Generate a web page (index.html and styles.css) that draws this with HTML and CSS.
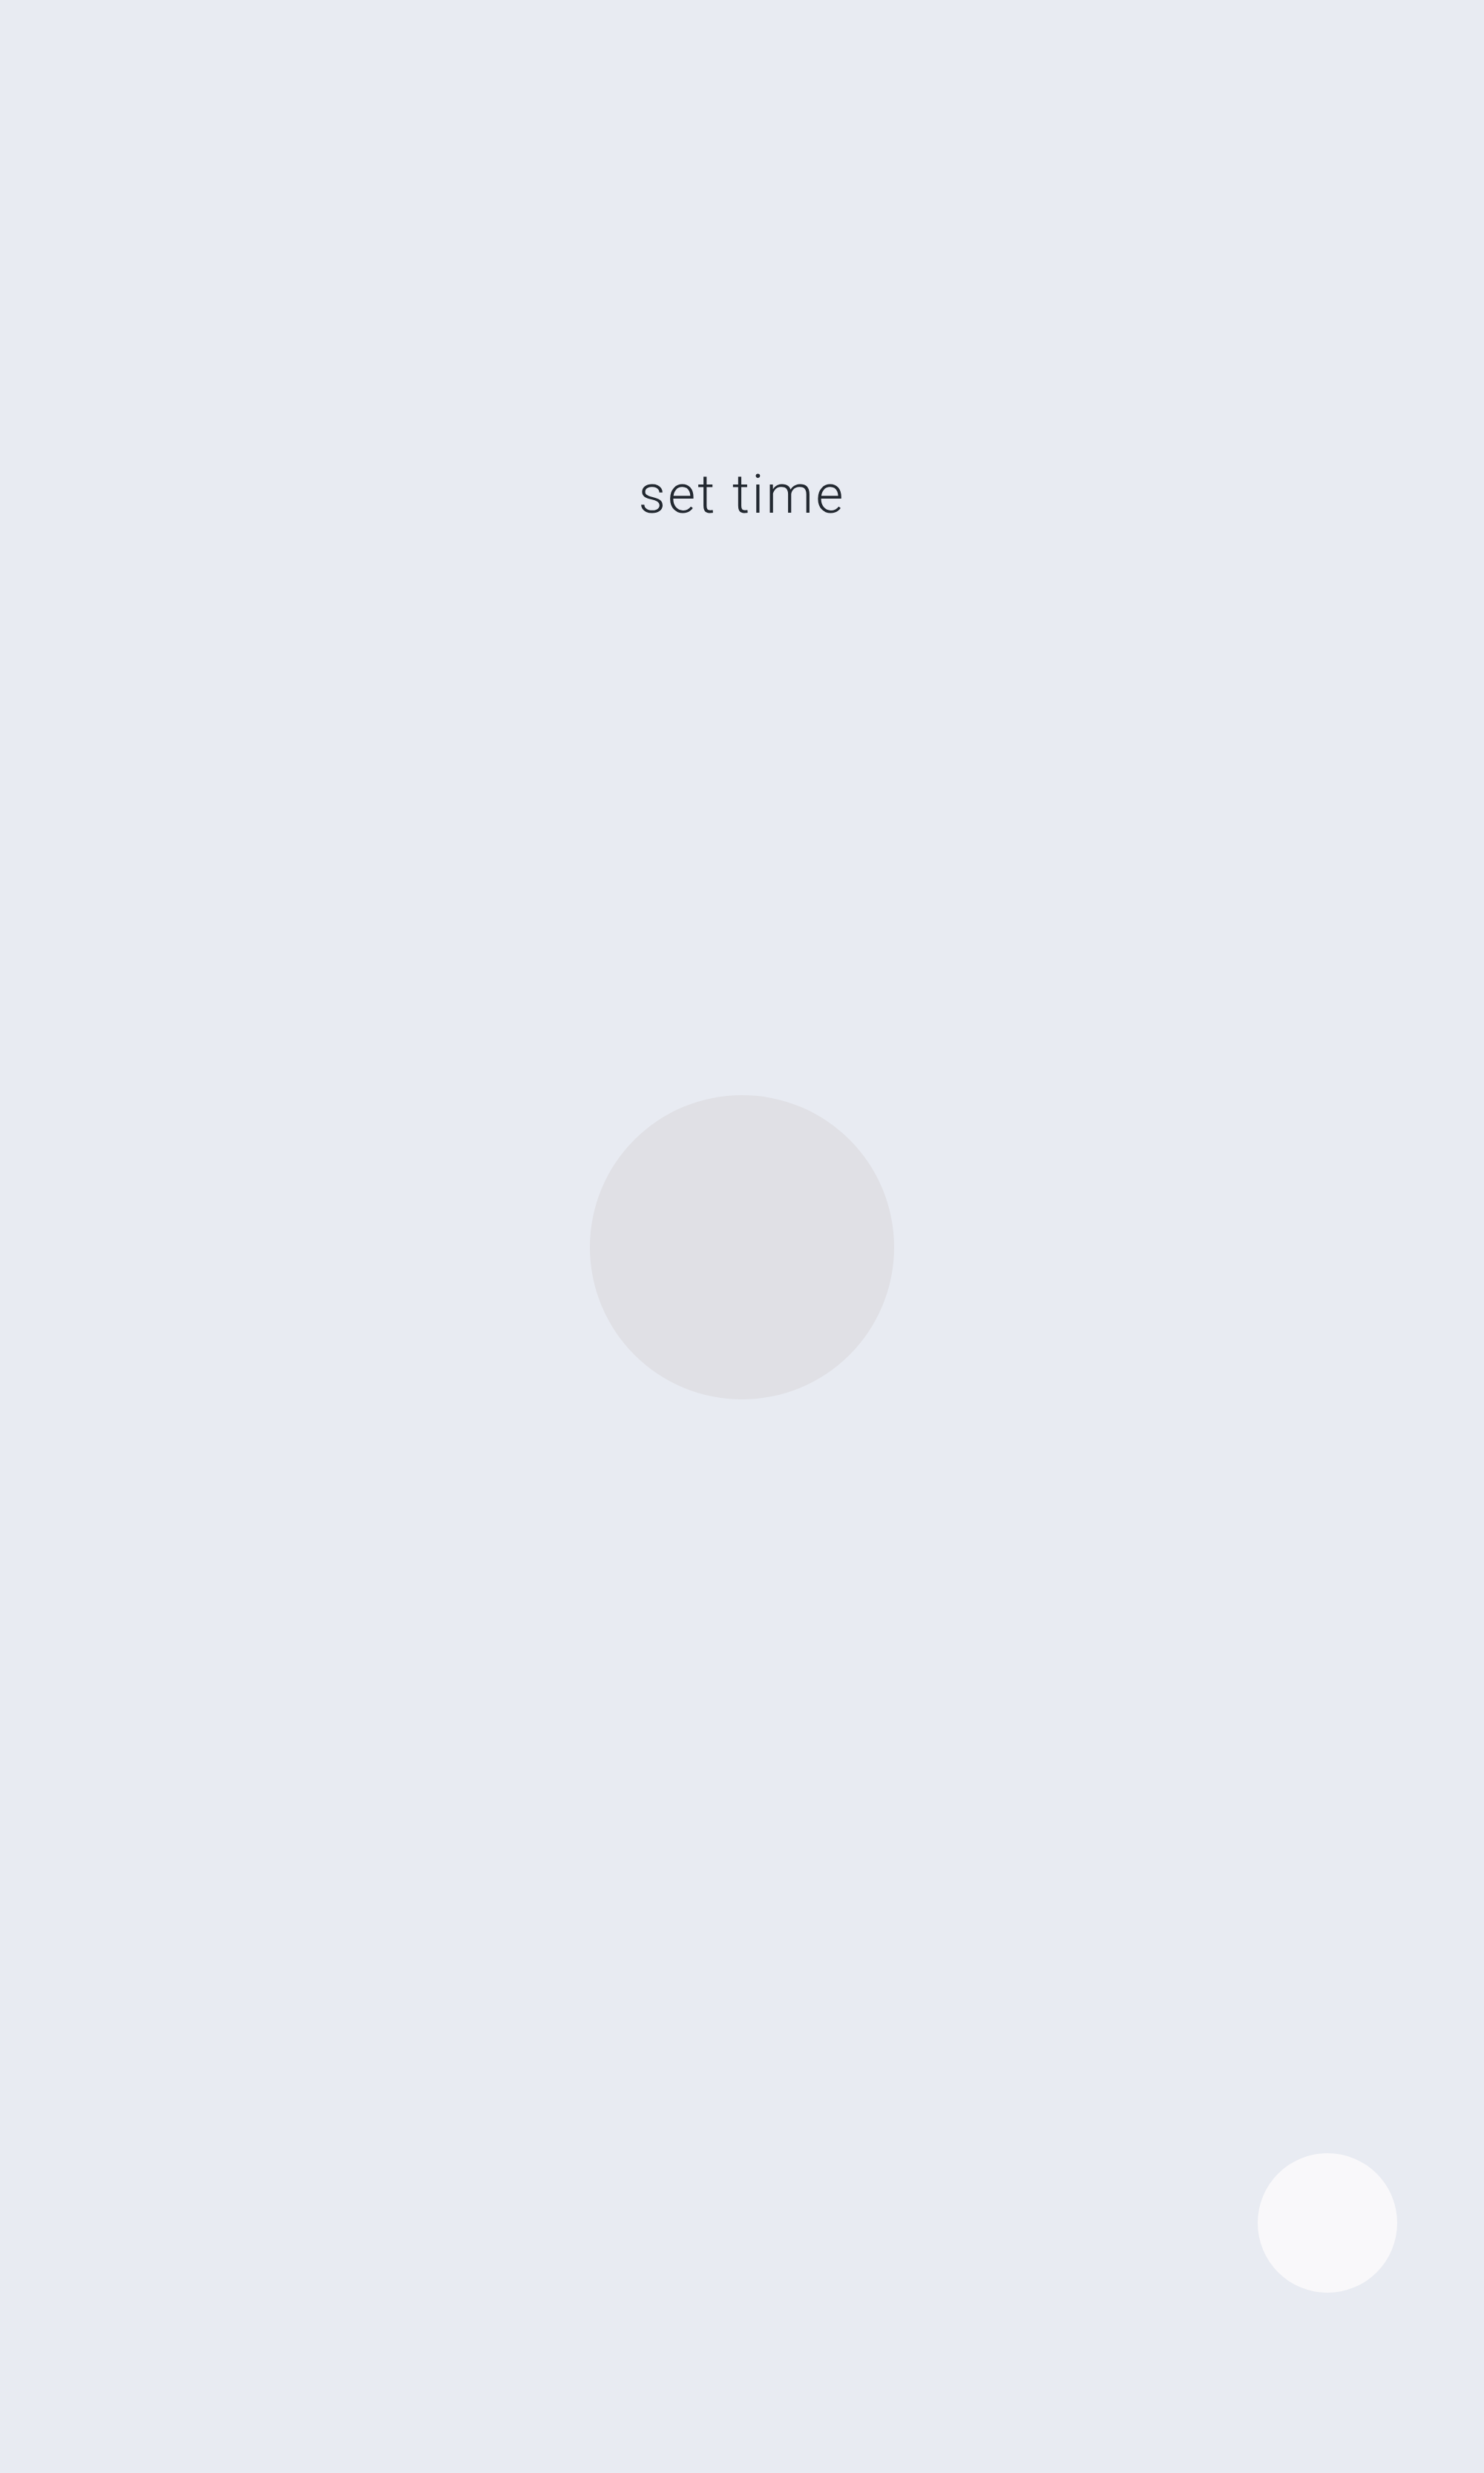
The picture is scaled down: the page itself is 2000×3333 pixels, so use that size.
FILE: index.html
```html
<!DOCTYPE html>
<html>
<head>
<meta charset="utf-8">
<link rel="stylesheet" href="styles.css">
</head>
<body>
<main class="screen">
  <h1 class="title">set time</h1>
  <div class="dial"></div>
  <button class="fab" aria-label="action"></button>
</main>
</body>
</html>
```
FILE: styles.css
```css
html, body {
  margin: 0;
  padding: 0;
  background: #e8ebf2;
}
.screen {
  position: relative;
  width: 2000px;
  height: 3333px;
  display: flex;
  flex-direction: column;
  align-items: center;
}
.title {
  margin: 625px 0 0 0;
  font-family: Roboto, "Liberation Sans", sans-serif;
  font-weight: 300;
  font-size: 72px;
  line-height: 84px;
  letter-spacing: 3px;
  color: #222830;
}
.dial {
  margin-top: 767px;
  width: 410px;
  height: 410px;
  border-radius: 50%;
  background: #e0e0e5;
}
.fab {
  position: absolute;
  right: 117px;
  bottom: 243px;
  width: 188px;
  height: 188px;
  border-radius: 50%;
  border: none;
  padding: 0;
  background: #f9f8fa;
}
```
